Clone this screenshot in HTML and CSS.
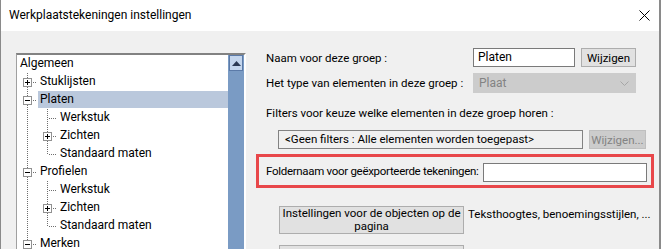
FILE: index.html
```html
<!DOCTYPE html>
<html lang="nl">
<head>
    <meta charset="UTF-8">
    <title>Werkplaatstekeningen instellingen</title>
    <link rel="stylesheet" href="styles.css">
</head>
<body>

<div class="window">
    <div class="titlebar">
        <span class="title">Werkplaatstekeningen instellingen</span>
        <svg class="close" width="11" height="11" viewBox="0 0 11 11">
            <path d="M0.5 0.5 L10.5 10.5 M10.5 0.5 L0.5 10.5" stroke="#000" stroke-width="1" fill="none"/>
        </svg>
    </div>

    <div class="content">
        <!-- Boom met groepen -->
        <div class="tree">
            <div class="tree-items">
                <div class="node"><span class="label root">Algemeen</span></div>
                <div class="node"><span class="cell tee"><svg class="box" width="9" height="9" viewBox="0 0 9 9"><rect x="0.5" y="0.5" width="8" height="8" fill="#fff" stroke="#919191"/><path d="M2 4.5 H7 M4.5 2 V7" stroke="#000"/></svg></span><span class="label">Stuklijsten</span></div>
                <div class="node"><span class="cell tee"><svg class="box" width="9" height="9" viewBox="0 0 9 9"><rect x="0.5" y="0.5" width="8" height="8" fill="#fff" stroke="#919191"/><path d="M2 4.5 H7" stroke="#000"/></svg></span><span class="label selected">Platen</span></div>
                <div class="node"><span class="cell pipe"></span><span class="cell tee"></span><span class="label">Werkstuk</span></div>
                <div class="node"><span class="cell pipe"></span><span class="cell tee"><svg class="box" width="9" height="9" viewBox="0 0 9 9"><rect x="0.5" y="0.5" width="8" height="8" fill="#fff" stroke="#919191"/><path d="M2 4.5 H7 M4.5 2 V7" stroke="#000"/></svg></span><span class="label">Zichten</span></div>
                <div class="node"><span class="cell pipe"></span><span class="cell elbow"></span><span class="label">Standaard maten</span></div>
                <div class="node"><span class="cell tee"><svg class="box" width="9" height="9" viewBox="0 0 9 9"><rect x="0.5" y="0.5" width="8" height="8" fill="#fff" stroke="#919191"/><path d="M2 4.5 H7" stroke="#000"/></svg></span><span class="label">Profielen</span></div>
                <div class="node"><span class="cell pipe"></span><span class="cell tee"></span><span class="label">Werkstuk</span></div>
                <div class="node"><span class="cell pipe"></span><span class="cell tee"><svg class="box" width="9" height="9" viewBox="0 0 9 9"><rect x="0.5" y="0.5" width="8" height="8" fill="#fff" stroke="#919191"/><path d="M2 4.5 H7 M4.5 2 V7" stroke="#000"/></svg></span><span class="label">Zichten</span></div>
                <div class="node"><span class="cell pipe"></span><span class="cell elbow"></span><span class="label">Standaard maten</span></div>
                <div class="node"><span class="cell tee"><svg class="box" width="9" height="9" viewBox="0 0 9 9"><rect x="0.5" y="0.5" width="8" height="8" fill="#fff" stroke="#919191"/><path d="M2 4.5 H7" stroke="#000"/></svg></span><span class="label">Merken</span></div>
            </div>
            <div class="scrollbar">
                <div class="scroll-up">
                    <svg width="9" height="5" viewBox="0 0 9 5"><path d="M0 5 L4.5 0 L9 5 Z" fill="#2c3a55"/></svg>
                </div>
            </div>
        </div>

        <!-- Instellingen van de groep -->
        <div class="settings">
            <div class="row first">
                <span class="caption">Naam voor deze groep :</span>
                <div class="textbox name">Platen</div>
                <div class="btn small">Wijzigen</div>
            </div>
            <div class="row second">
                <span class="caption">Het type van elementen in deze groep :</span>
                <div class="combo disabled">
                    <span>Plaat</span>
                    <svg width="9" height="5" viewBox="0 0 9 5"><path d="M0.5 0.5 L4.5 4.5 L8.5 0.5" stroke="#a6a6a6" fill="none"/></svg>
                </div>
            </div>
            <div class="row third">
                <span class="caption">Filters voor keuze welke elementen in deze groep horen :</span>
            </div>
            <div class="row filters">
                <div class="filterbox">&lt;Geen filters : Alle elementen worden toegepast&gt;</div>
                <div class="btn disabled wide">Wijzigen...</div>
            </div>
            <div class="row highlight">
                <span class="caption tight">Foldernaam voor geëxporteerde tekeningen:</span>
                <div class="textbox folder"></div>
            </div>
            <div class="row objects">
                <div class="btn big">Instellingen voor de objecten op de pagina</div>
                <span class="hint">Teksthoogtes, benoemingsstijlen, ...</span>
            </div>
            <div class="row objects next">
                <div class="btn big"></div>
                <span class="hint">Maatlijnen, pijlen, ...</span>
            </div>
        </div>
    </div>
</div>

</body>
</html>
```

FILE: styles.css
```css
body {
    margin: 0;
    font-family: Roboto, "Noto Sans", sans-serif;
    font-size: 11.5px;
    color: #000;
    background-color: #f0f0f0;
}
.window {
    width: 661px;
    height: 249px;
    overflow: hidden;
    box-sizing: border-box;
    border-left: 1px solid #8a8a8a;
    border-right: 2px solid #8a8a8a;
    background-color: #f0f0f0;
}
.titlebar {
    height: 31px;
    background-color: #fff;
    display: flex;
    align-items: center;
    padding: 0 9px 0 8px;
}
.title {
    flex: 1;
    margin-top: -1px;
    font-size: 12px;
}

.content {
    display: flex;
    align-items: flex-start;
    padding-left: 15px;
}

/* Boom */
.tree {
    margin-top: 22px;
    width: 230px;
    height: 220px;
    box-sizing: border-box;
    display: flex;
    background-color: #fff;
    border-top: 2px solid #828282;
    border-left: 1px solid #a0a0a0;
    border-right: 2px solid #fff;
}
.tree-items {
    flex: 1;
    font-size: 12px;
}
.node {
    height: 18px;
    display: flex;
    align-items: stretch;
}
.label {
    flex: 1;
    margin-left: 1px;
    padding-left: 2px;
    height: 17px;
    line-height: 17px;
    white-space: nowrap;
}
.label.root {
    margin-left: 0;
    padding-left: 3px;
}
.label.selected {
    background-color: #bac8dc;
}
.cell {
    width: 20px;
    flex: none;
    position: relative;
    box-sizing: border-box;
}
.cell.pipe,
.cell.tee,
.cell.elbow {
    background-image: linear-gradient(#6e6e6e 50%, transparent 50%);
    background-size: 1px 2px;
    background-repeat: repeat-y;
    background-position: 10px 0;
}
.cell.elbow {
    background-clip: content-box;
    padding-bottom: 9px;
}
.cell.tee::after,
.cell.elbow::after {
    content: "";
    position: absolute;
    left: 12px;
    top: 9px;
    width: 8px;
    height: 1px;
    background-image: linear-gradient(90deg, #6e6e6e 50%, transparent 50%);
    background-size: 2px 1px;
}
.box {
    position: absolute;
    left: 6px;
    top: 5px;
    z-index: 1;
    display: block;
}
.scrollbar {
    width: 16px;
    flex: none;
    background-color: #7a9bc4;
}
.scroll-up {
    height: 16px;
    margin: 0 1px;
    box-sizing: border-box;
    background-color: #c4d6ee;
    border: 1px solid #5b7aa8;
    display: flex;
    align-items: center;
    justify-content: center;
}

/* Rechterkant */
.settings {
    width: 398px;
    margin-left: 10px;
}
.row {
    display: flex;
    align-items: center;
}
.caption {
    width: 217px;
    flex: none;
    padding-left: 10px;
    box-sizing: border-box;
    white-space: nowrap;
}
.caption.tight {
    letter-spacing: -0.3px;
}
.row.first {
    margin-top: 17px;
    height: 19px;
}
.row.second {
    margin-top: 6px;
    height: 20px;
}
.row.third {
    margin-top: 10px;
    height: 20px;
}
.row.third .caption {
    width: auto;
}
.textbox {
    box-sizing: border-box;
    background-color: #fff;
    border: 1px solid #7a7a7a;
    height: 19px;
    line-height: 17px;
    padding-left: 4px;
}
.textbox.name {
    width: 102px;
    font-size: 12px;
}
.btn {
    box-sizing: border-box;
    background-color: #e1e1e1;
    border: 1px solid #adadad;
    text-align: center;
    display: flex;
    align-items: center;
    justify-content: center;
}
.btn.small {
    width: 55px;
    height: 19px;
    margin-left: 6px;
}
.btn.disabled {
    background-color: #cccccc;
    border-color: #bfbfbf;
    color: #838383;
}
.combo {
    box-sizing: border-box;
    width: 163px;
    height: 20px;
    display: flex;
    align-items: center;
    justify-content: space-between;
    padding: 0 6px 0 5px;
    font-size: 12px;
}
.combo.disabled {
    background-color: #cccccc;
    border: 1px solid #cccccc;
    color: #838383;
}
.row.filters {
    margin-top: 7px;
    height: 19px;
    padding-left: 22px;
}
.filterbox {
    box-sizing: border-box;
    width: 305px;
    height: 19px;
    line-height: 17px;
    border: 1px solid #828282;
    padding-left: 6px;
    white-space: nowrap;
}
.btn.wide {
    width: 57px;
    height: 19px;
    margin-left: 6px;
}
.row.highlight {
    margin-top: 5px;
    height: 34px;
    box-sizing: border-box;
    border: 3px solid #e8474a;
    padding-left: 7px;
}
.row.highlight .caption {
    padding-left: 0;
}
.textbox.folder {
    width: 164px;
    margin-top: 2px;
}
.row.objects {
    margin-top: 18px;
    align-items: flex-start;
    padding-left: 23px;
}
.row.objects.next {
    margin-top: 11px;
}
.btn.big {
    width: 185px;
    height: 28px;
    line-height: 13px;
    padding: 0 2px;
}
.hint {
    margin-left: 4px;
    margin-top: 1px;
    white-space: nowrap;
}
```
